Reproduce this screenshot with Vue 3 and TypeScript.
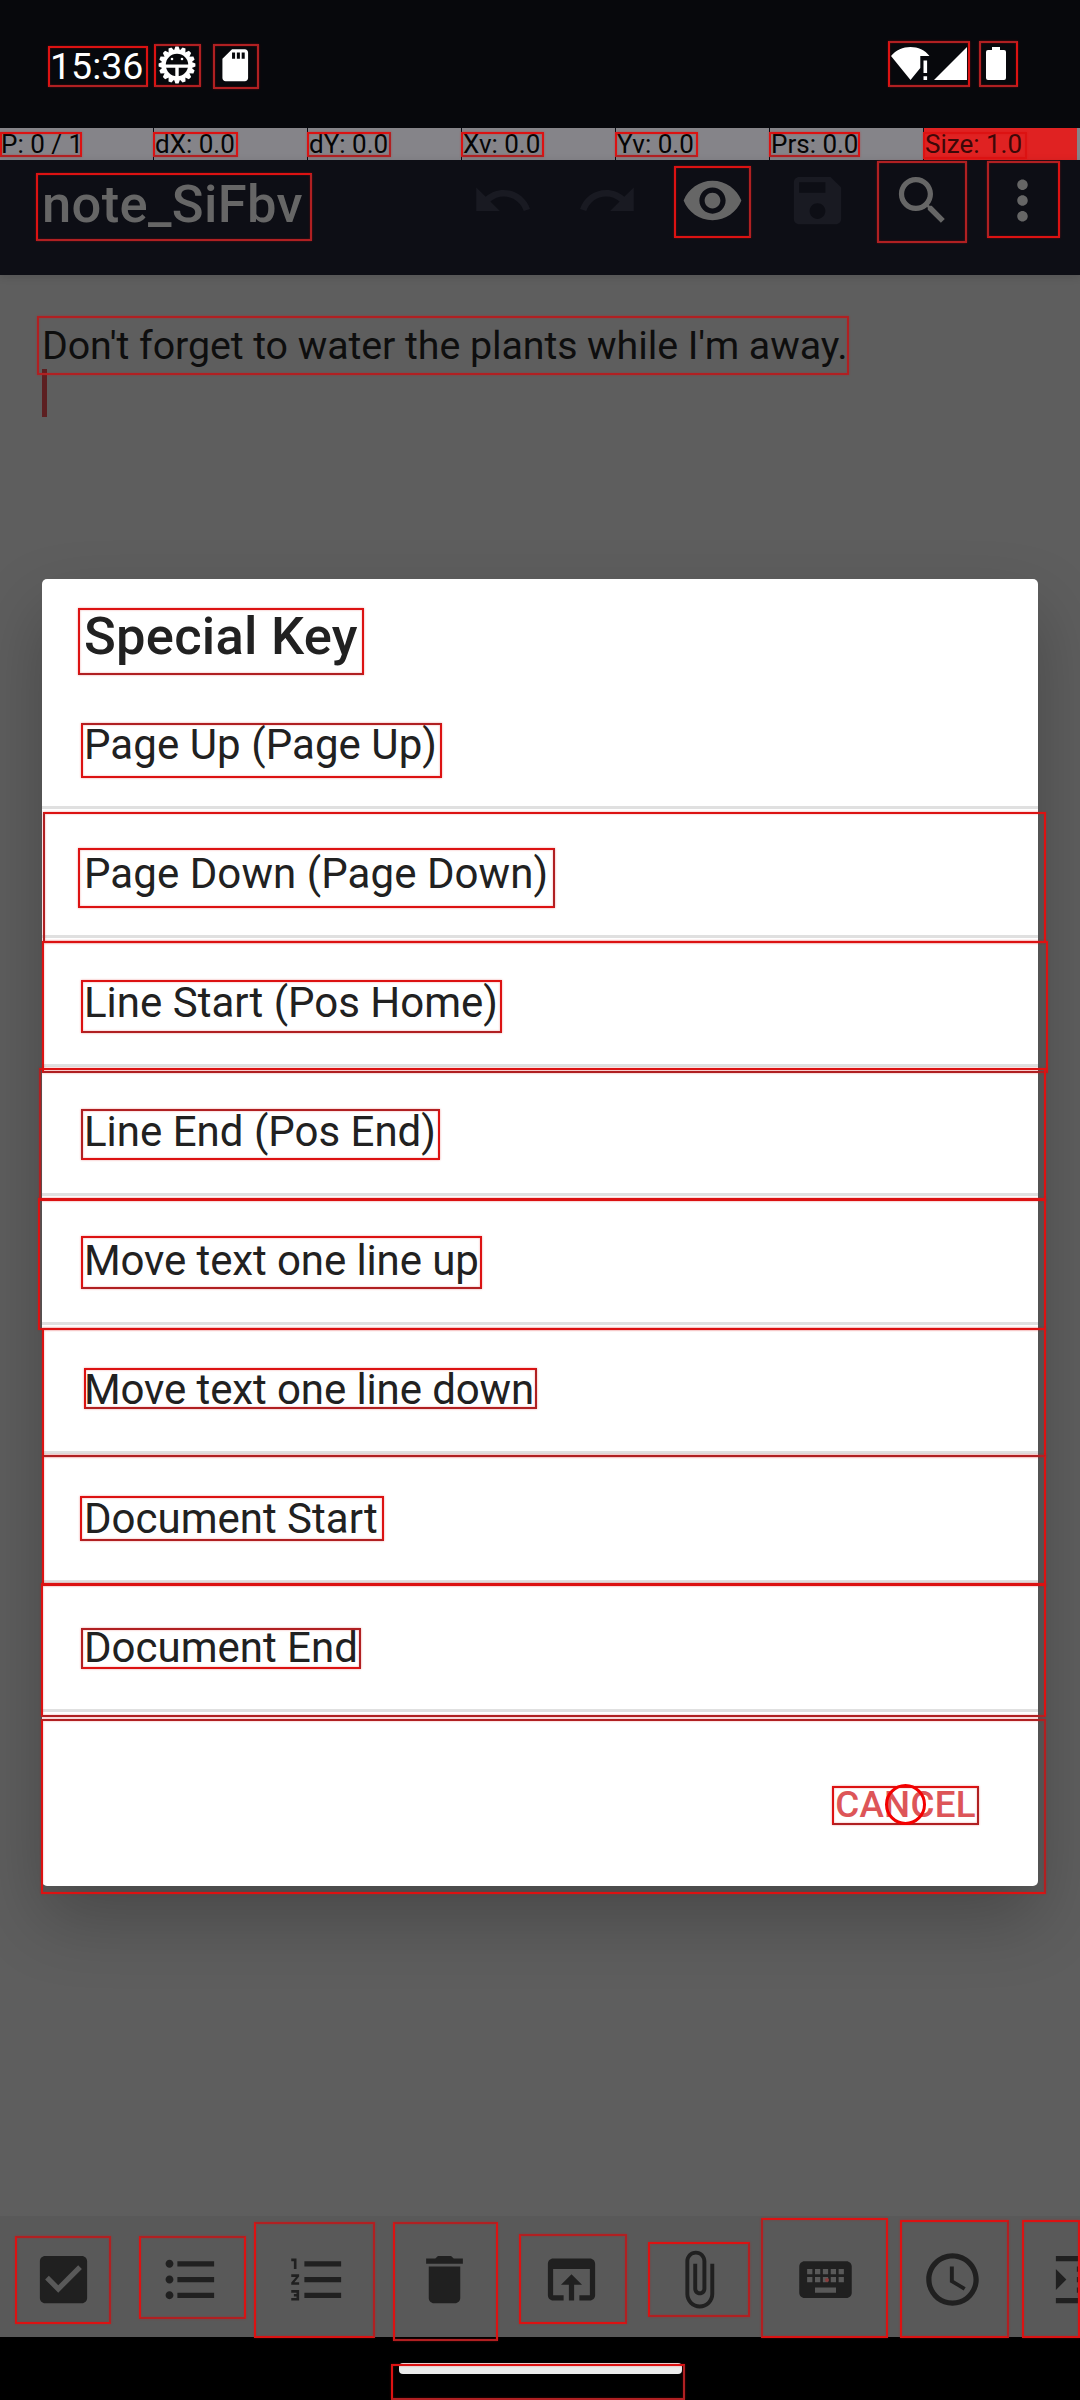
<script setup lang="ts">
interface Mark { x: number; y: number; r: number; b: number; edges: string }

const pointerStats = ['P: 0 / 1', 'dX: 0.0', 'dY: 0.0', 'Xv: 0.0', 'Yv: 0.0', 'Prs: 0.0', 'Size: 1.0']

const actions = [
  { name: 'undo', off: true, d: 'M12.5 8c-2.65 0-5.05.99-6.9 2.6L2 7v9h9l-3.62-3.62c1.39-1.16 3.16-1.88 5.12-1.88 3.54 0 6.55 2.31 7.6 5.5l2.37-.78C21.08 11.03 17.15 8 12.5 8z' },
  { name: 'redo', off: true, d: 'M18.4 10.6C16.55 8.99 14.15 8 11.5 8c-4.65 0-8.58 3.03-9.96 7.22L3.9 16c1.05-3.19 4.05-5.5 7.6-5.5 1.95 0 3.73.72 5.12 1.88L13 16h9V7l-3.6 3.6z' },
  { name: 'view', off: false, d: 'M12 4.5C7 4.5 2.73 7.61 1 12c1.73 4.39 6 7.5 11 7.5s9.27-3.11 11-7.5c-1.73-4.39-6-7.5-11-7.5zM12 17c-2.76 0-5-2.24-5-5s2.24-5 5-5 5 2.24 5 5-2.24 5-5 5zm0-8c-1.66 0-3 1.34-3 3s1.34 3 3 3 3-1.34 3-3-1.34-3-3-3z' },
  { name: 'save', off: true, d: 'M17 3H5c-1.11 0-2 .9-2 2v14c0 1.1.89 2 2 2h14c1.1 0 2-.9 2-2V7l-4-4zm-5 16c-1.66 0-3-1.34-3-3s1.34-3 3-3 3 1.34 3 3-1.34 3-3 3zm3-10H5V5h10v4z' },
  { name: 'search', off: false, d: 'M15.5 14h-.79l-.28-.27C15.41 12.59 16 11.11 16 9.5 16 5.91 13.09 3 9.5 3S3 5.91 3 9.5 5.91 16 9.5 16c1.61 0 3.09-.59 4.23-1.57l.27.28v.79l5 4.99L20.49 19l-4.99-5zm-6 0C7.01 14 5 11.99 5 9.5S7.01 5 9.5 5 14 7.01 14 9.5 11.99 14 9.5 14z' },
  { name: 'more', off: false, d: 'M12 8c1.1 0 2-.9 2-2s-.9-2-2-2-2 .9-2 2 .9 2 2 2zm0 2c-1.1 0-2 .9-2 2s.9 2 2 2 2-.9 2-2-.9-2-2-2zm0 6c-1.1 0-2 .9-2 2s.9 2 2 2 2-.9 2-2-.9-2-2-2z' },
]

const keys = [
  { label: 'Page Up (Page Up)', fit: 'wide' },
  { label: 'Page Down (Page Down)', fit: 'wide' },
  { label: 'Line Start (Pos Home)', fit: '' },
  { label: 'Line End (Pos End)', fit: '' },
  { label: 'Move text one line up', fit: 'tight' },
  { label: 'Move text one line down', fit: 'tight' },
  { label: 'Document Start', fit: '' },
  { label: 'Document End', fit: '' },
]

const tools = [
  'M19 3H5c-1.11 0-2 .9-2 2v14c0 1.1.89 2 2 2h14c1.11 0 2-.9 2-2V5c0-1.1-.89-2-2-2zm-9 14l-5-5 1.41-1.41L10 14.17l7.59-7.59L19 8l-9 9z',
  'M4 10.5c-.83 0-1.5.67-1.5 1.5s.67 1.5 1.5 1.5 1.5-.67 1.5-1.5-.67-1.5-1.5-1.5zm0-6c-.83 0-1.5.67-1.5 1.5S3.17 7.5 4 7.5 5.5 6.83 5.5 6 4.83 4.5 4 4.5zm0 12c-.83 0-1.5.68-1.5 1.5s.68 1.5 1.5 1.5 1.5-.68 1.5-1.5-.67-1.5-1.5-1.5zM7 19h14v-2H7v2zm0-6h14v-2H7v2zm0-8v2h14V5H7z',
  'M2 17h2v.5H3v1h1v.5H2v1h3v-4H2v1zm1-9h1V4H2v1h1v3zm-1 3h1.8L2 13.1v.9h3v-1H3.2L5 10.9V10H2v1zm5-6v2h14V5H7zm0 14h14v-2H7v2zm0-6h14v-2H7v2z',
  'M6 19c0 1.1.9 2 2 2h8c1.1 0 2-.9 2-2V7H6v12zM19 4h-3.5l-1-1h-5l-1 1H5v2h14V4z',
  'M19 4H5c-1.11 0-2 .9-2 2v12c0 1.1.89 2 2 2h4v-2H5V8h14v10h-4v2h4c1.1 0 2-.9 2-2V6c0-1.1-.89-2-2-2zm-7 6l-4 4h3v6h2v-6h3l-4-4z',
  'M16.5 6v11.5c0 2.21-1.79 4-4 4s-4-1.79-4-4V5c0-1.38 1.12-2.5 2.5-2.5s2.5 1.12 2.5 2.5v10.5c0 .55-.45 1-1 1s-1-.45-1-1V6H10v9.5c0 1.38 1.12 2.5 2.5 2.5s2.5-1.12 2.5-2.5V5c0-2.21-1.79-4-4-4S7 2.79 7 5v12.5c0 3.04 2.46 5.5 5.5 5.5s5.5-2.46 5.5-5.5V6h-1.5z',
  'M20 5H4c-1.1 0-1.99.9-1.99 2L2 17c0 1.1.9 2 2 2h16c1.1 0 2-.9 2-2V7c0-1.1-.9-2-2-2zm-9 3h2v2h-2V8zm0 3h2v2h-2v-2zM8 8h2v2H8V8zm0 3h2v2H8v-2zm-1 2H5v-2h2v2zm0-3H5V8h2v2zm9 7H8v-2h8v2zm0-4h-2v-2h2v2zm0-3h-2V8h2v2zm3 3h-2v-2h2v2zm0-3h-2V8h2v2z',
  'M11.99 2C6.47 2 2 6.48 2 12s4.47 10 9.99 10C17.52 22 22 17.52 22 12S17.52 2 11.99 2zM12 20c-4.42 0-8-3.58-8-8s3.58-8 8-8 8 3.58 8 8-3.58 8-8 8zm.5-13H11v6l5.25 3.15.75-1.23-4.5-2.67z',
  'M3 21h18v-2H3v2zM3 8v8l4-4-4-4zm8 9h10v-2H11v2zM3 3v2h18V3H3zm8 6h10V7H11v2zm0 4h10v-2H11v2z',
]

// Left, top, right, bottom, then edge tones (top, right, bottom, left): b = bright, d = dark.
const raw: [number, number, number, number, string][] = [
  [48, 46, 148, 87, 'bbdb'], [154, 44, 201, 87, 'dddb'], [213, 44, 259, 89, 'dddd'],
  [888, 41, 970, 87, 'dbdb'], [979, 41, 1018, 87, 'dbdd'],
  [0, 132, 82, 157, 'bbdb'], [153, 132, 238, 157, 'bbdb'], [307, 132, 391, 157, 'bddb'],
  [461, 132, 544, 157, 'bbdb'], [615, 132, 698, 157, 'bbdb'], [769, 132, 860, 157, 'bbdb'],
  [923, 132, 1027, 159, 'bbbb'],
  [36, 173, 312, 241, 'bddb'], [674, 166, 751, 238, 'bdbb'], [877, 161, 967, 243, 'dddd'], [987, 161, 1060, 238, 'dbbd'],
  [37, 316, 849, 375, 'dddd'],
  [78, 608, 364, 675, 'bbdb'],
  [81, 723, 442, 778, 'dbbb'], [78, 848, 555, 908, 'bdbb'], [81, 980, 502, 1033, 'bbdb'], [81, 1109, 440, 1160, 'dbbd'],
  [81, 1236, 482, 1289, 'bbdb'], [84, 1368, 537, 1409, 'bddb'], [80, 1496, 384, 1541, 'bbdb'], [81, 1628, 361, 1669, 'ddbd'],
  [43, 812, 1046, 943, 'bbbd'], [42, 941, 1048, 1073, 'bbdb'], [39, 1068, 1046, 1201, 'bbbd'],
  [38, 1198, 1046, 1330, 'bbbb'], [42, 1328, 1046, 1457, 'bbdb'], [42, 1455, 1046, 1586, 'dbbb'],
  [41, 1583, 1046, 1717, 'bbdb'], [41, 1719, 1046, 1894, 'ddbb'],
  [832, 1786, 979, 1825, 'bddb'],
  [15, 2236, 111, 2324, 'ddbb'], [139, 2236, 246, 2319, 'dbdb'], [254, 2222, 375, 2338, 'ddbb'],
  [393, 2222, 498, 2341, 'dbdb'], [519, 2234, 627, 2324, 'ddbb'], [648, 2242, 750, 2317, 'bddb'],
  [761, 2218, 888, 2338, 'bbbd'], [900, 2220, 1009, 2338, 'bdbb'], [1022, 2220, 1080, 2338, 'bbbb'],
  [391, 2364, 685, 2400, 'bddb'],
]
const marks: Mark[] = raw.map(([x, y, r, b, edges]) => ({ x, y, r, b, edges }))

function markStyle(m: Mark) {
  return {
    left: m.x + 'px',
    top: m.y + 'px',
    width: m.r - m.x + 'px',
    height: m.b - m.y + 'px',
    borderColor: m.edges.split('').map(e => (e === 'b' ? '#dc1212' : '#b02022')).join(' '),
  }
}

const teeth = Array.from({ length: 16 }, (_, i) => i * 22.5)
</script>

<template>
  <div class="screen">
    <header class="status">
      <span class="clock">15:36</span>
      <svg class="bug" viewBox="-20 -20 40 40">
        <path v-for="a in teeth" :key="a" :transform="`rotate(${a})`" d="M-3.4-13.5L-1.6-18.4H1.6L3.4-13.5z" fill="#fff" />
        <circle r="13" fill="none" stroke="#fff" stroke-width="3.6" />
        <path d="M-13-.6H13V2.8H1.7V14H-1.7V2.8H-13z" fill="#fff" />
        <circle cx="-5" cy="-6" r="1.3" fill="#fff" />
        <circle cx="5" cy="-6" r="1.3" fill="#fff" />
      </svg>
      <svg class="sd" viewBox="0 0 24 24"><path fill="#fff" d="M18 2h-8L4 8v12c0 1.1.9 2 2 2h12c1.1 0 2-.9 2-2V4c0-1.1-.9-2-2-2zm-6.100 6h-1.900V4h1.900v4zm3 0h-1.900V4h1.900v4zm3 0h-1.900V4h1.900v4z" /></svg>
      <span class="grow"></span>
      <svg class="wifi" viewBox="0 0 39 33">
        <path fill="#fff" d="M0 9C5 3 12 0 19.500 0S34 3 38.500 9H29.300V21L19.500 33z" />
        <path fill="#fff" d="M32.500 13.500h3.600v12.500h-3.600zM32.500 29.300h3.600v3.700h-3.600z" />
      </svg>
      <svg class="cell" viewBox="0 0 33 33"><path fill="#fff" d="M33 0v33H0z" /></svg>
      <svg class="battery" viewBox="0 0 20 33"><path fill="#fff" d="M6 0h8v3h4q2 0 2 2v26q0 2-2 2H2q-2 0-2-2V5q0-2 2-2h4z" /></svg>
    </header>

    <div class="pointer">
      <span v-for="(s, i) in pointerStats" :key="s" class="stat" :class="{ hot: i === 6 }">{{ s }}</span>
      <span class="rest"></span>
    </div>

    <div class="toolbar">
      <h1>note_SiFbv</h1>
      <span v-for="a in actions" :key="a.name" class="action" :class="[a.name, { off: a.off }]">
        <svg viewBox="0 0 24 24"><path :d="a.d" fill="currentColor" /></svg>
      </span>
    </div>

    <main class="editor">
      <p>Don't forget to water the plants while I'm away.</p>
      <i class="caret"></i>
    </main>

    <div class="tools">
      <span v-for="(d, i) in tools" :key="i" class="tool">
        <svg viewBox="0 0 24 24"><path :d="d" fill="currentColor" /></svg>
      </span>
    </div>
    <footer class="nav"><span class="pill"></span></footer>

    <section class="dialog">
      <h2>Special Key</h2>
      <ul>
        <li v-for="k in keys" :key="k.label" :class="k.fit">{{ k.label }}</li>
      </ul>
      <div class="buttons"><button>CANCEL</button></div>
    </section>

    <div v-for="(m, i) in marks" :key="i" class="mark" :style="markStyle(m)"></div>
    <div class="ring"></div>
    <div class="dot"></div>
  </div>
</template>

<style>
body { margin: 0; background: #000; }
</style>

<style scoped>
.screen {
  position: relative;
  display: flex;
  flex-direction: column;
  width: 1080px;
  height: 2400px;
  overflow: hidden;
  background: #5e5e5e;
  font-family: Roboto, "Liberation Sans", sans-serif;
}
svg { display: block; flex: none; }
.status {
  flex: none;
  display: flex;
  align-items: flex-start;
  box-sizing: border-box;
  height: 128px;
  padding: 45px 74px 0 50px;
  background: #07080c;
  color: #fff;
}
.clock { width: 107px; font-size: 37.500px; line-height: 43px; white-space: nowrap; }
.bug { width: 40px; height: 40px; }
.sd { width: 38.500px; height: 38.500px; margin: 1px 0 0 18.500px; }
.grow { flex: 1; }
.wifi { width: 39px; height: 33px; margin-top: 2px; }
.cell { width: 33px; height: 33px; margin: 2px 0 0 4px; }
.battery { width: 20px; height: 33px; margin: 2px 0 0 19px; }

.pointer { flex: none; display: flex; gap: 1px; height: 32px; background: #0d0e15; }
.stat {
  flex: none;
  box-sizing: border-box;
  width: 153px;
  padding-left: 1px;
  background: #858489;
  color: #050505;
  font-size: 26px;
  line-height: 32px;
  white-space: nowrap;
}
.stat.hot { background: #e02222; color: #3c0808; }
.rest { flex: 1; margin-left: -1px; background: #858489; }

.toolbar {
  flex: none;
  display: flex;
  align-items: flex-start;
  box-sizing: border-box;
  height: 115px;
  padding: 0 10px 0 42px;
  background: #0d0e15;
  box-shadow: 0 2px 8px rgba(0, 0, 0, 0.120);
}
.toolbar h1 {
  flex: 1;
  margin: 13px 0 0;
  color: #666;
  font-size: 52.500px;
  font-weight: 500;
  letter-spacing: 0.350px;
  line-height: 62px;
}
.action { display: flex; justify-content: center; width: 105px; padding-top: 9px; color: #666; }
.action svg { width: 63px; height: 63px; }
.action.off { color: #191a22; }
.action.more { width: 95px; }

.editor { flex: 1; padding: 48px 42px 0; }
.editor p { margin: 0; color: #0e0e0e; font-size: 39.375px; letter-spacing: -0.080px; line-height: 46px; white-space: nowrap; }
.caret { display: block; width: 5px; height: 48px; background: #5c1f21; }

.tools { flex: none; display: flex; height: 121px; background: #595959; color: #202020; overflow: hidden; }
.tool { flex: none; display: flex; justify-content: center; align-items: center; width: 127px; }
.tool svg { width: 63px; height: 63px; margin-top: 5px; }
.nav { flex: none; display: flex; justify-content: center; height: 63px; background: #000; }
.pill { width: 283px; height: 11px; margin-top: 26px; border-radius: 4px; background: #ebebeb; }

.dialog {
  position: absolute;
  left: 42px;
  top: 579px;
  width: 996px;
  height: 1307px;
  border-radius: 5px;
  background: #fff;
  box-shadow: 0 32px 70px rgba(0, 0, 0, 0.240);
}
.dialog h2 { margin: 0; padding: 26px 42px 13px; color: #212121; font-size: 52.500px; font-weight: 500; letter-spacing: 0.250px; line-height: 62px; }
.dialog ul { margin: 0; padding: 0; list-style: none; }
.dialog li {
  height: 126px;
  padding-left: 42px;
  border-bottom: 3px solid #e0e0e0;
  color: #212121;
  font-size: 42px;
  line-height: 129px;
}
.dialog li.wide { letter-spacing: 0.070px; }
.dialog li.tight { letter-spacing: -0.110px; }
.buttons { display: flex; justify-content: flex-end; padding: 71px 62px 0 0; }
.buttons button {
  padding: 0;
  border: 0;
  background: none;
  color: #dd5558;
  font: 500 36.750px/43px Roboto, sans-serif;
  letter-spacing: 0.300px;
}

.mark { position: absolute; box-sizing: border-box; border: 2px solid #dc1212; box-shadow: 0 0 2px rgba(220, 18, 18, 0.400), inset 0 0 2px rgba(220, 18, 18, 0.400); }
.ring { position: absolute; box-sizing: border-box; left: 885px; top: 1784px; width: 41px; height: 41px; border: 3px solid #f40000; border-radius: 50%; }
.dot { position: absolute; left: 825px; top: 2278px; width: 4px; height: 4px; border-radius: 2px; background: #8a3c3c; }
</style>
